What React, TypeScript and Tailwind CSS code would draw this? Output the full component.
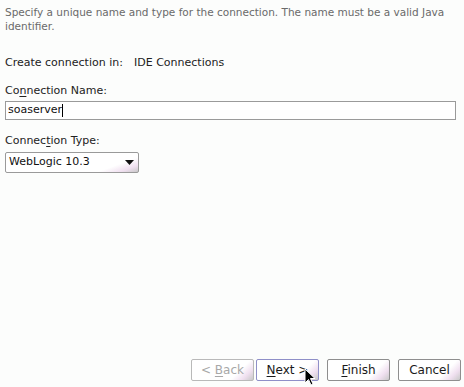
import React from 'react'

const U = ({ children }: { children: React.ReactNode }) => <span className="underline underline-offset-2">{children}</span>

const Btn = ({ children, disabled, focus, className = '' }: { children: React.ReactNode; disabled?: boolean; focus?: boolean; className?: string }) => (
  <div
    className={`w-[63px] h-[22px] flex items-center justify-center rounded-[2px] border text-[12px] ${className} ${
      disabled ? 'border-[#b9b9b9] text-[#a8a8a8]' : focus ? 'border-[#8f8fc8] text-[#1a1a1a]' : 'border-[#8e8e8e] text-[#1a1a1a]'
    } bg-[linear-gradient(135deg,#ffffff_0%,#ffffff_72%,#f0e0f0_86%,#c8c8c8_100%)]`}
  >
    <span className="whitespace-pre">{children}</span>
  </div>
)

export default function App() {
  return (
    <div className="w-[464px] h-[387px] bg-[#fcfdfc] relative overflow-hidden font-['DejaVu_Sans',sans-serif] text-[11px] text-[#222]">
      <div className="flex flex-col px-[5px] pt-[5px]">
        <p className="text-[#6a6a6a] text-[10.5px] leading-[14px]">
          Specify a unique name and type for the connection. The name must be a valid Java identifier.
        </p>
        <div className="flex mt-[23px] leading-[14px]">
          <span className="w-[129px]">Create connection in:</span>
          <span>IDE Connections</span>
        </div>
        <div className="mt-[14px] leading-[14px]">
          Co<U>n</U>nection Name:
        </div>
        <div className="mt-[3px] w-[451px] h-[19px] border border-[#9a9a9a] bg-white flex items-center pl-[2px]">
          <span className="text-[#111]">soaserver</span>
          <span className="w-[1px] h-[13px] bg-black" />
        </div>
        <div className="mt-[14px] leading-[14px]">
          Connec<U>t</U>ion Type:
        </div>
        <div className="mt-[4px] w-[134px] h-[21px] border border-[#9a9a9a] rounded-[2px] flex items-center justify-between pl-[3px] pr-[4px] bg-[linear-gradient(160deg,#ffffff_0%,#ffffff_78%,#f0e0f0_90%,#c8c8c8_100%)]">
          <span className="text-[#111]">WebLogic 10.3</span>
          <svg width="9" height="6" viewBox="0 0 9 6"><path d="M0 0h9L4.5 5z" fill="#111" /></svg>
        </div>
      </div>
      <div className="absolute left-0 right-[3px] bottom-[6px] flex justify-end">
        <Btn disabled>&lt; <U>B</U>ack</Btn>
        <Btn focus className="ml-[2px]"><U>N</U>ext &gt;</Btn>
        <Btn className="ml-[8px]"><U>F</U>inish</Btn>
        <Btn className="ml-[8px]">Cancel</Btn>
      </div>
      <svg className="absolute left-[304px] top-[368px]" width="12" height="18" viewBox="0 0 12 18">
        <path d="M1 1v14l3.5-3.5 2.5 5.5 2-1-2.5-5.5H11z" fill="#000" stroke="#fff" strokeWidth="1" />
      </svg>
    </div>
  )
}
